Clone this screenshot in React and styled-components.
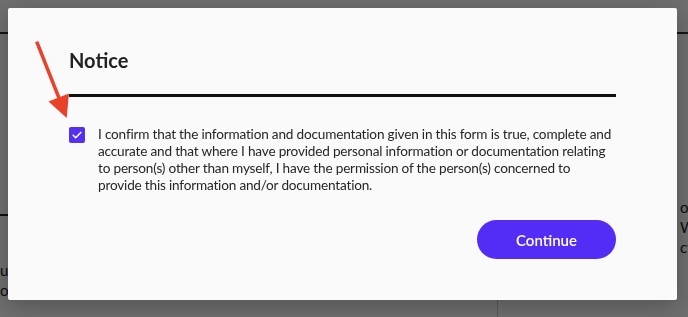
import React from 'react';
import styled, { createGlobalStyle } from 'styled-components';

const GlobalStyle = createGlobalStyle`
  html, body {
    margin: 0;
    padding: 0;
    background: #ffffff;
    font-family: Lato, "Liberation Sans", sans-serif;
    overflow: hidden;
  }
`

const Page = styled.div`
  width: 688px;
  height: 317px;
  display: flex;
  flex-direction: column;
  color: #222;
`
const Header = styled.div`
  height: 32px;
  border-bottom: 2px solid #333;
`
const Main = styled.div`
  flex: 1;
  display: grid;
  grid-template-columns: 497px 1fr;
`
const LeftCol = styled.div`
  padding-top: 180px;
`
const Rule = styled.div`
  height: 2px;
  background: #222;
  width: 200px;
  margin-bottom: 44px;
`
const BgLine = styled.div`
  font-size: 15px;
  line-height: 20px;
  white-space: nowrap;
`
const RightCol = styled.div`
  border-left: 1px solid #ccc;
  padding: 163px 0 0 182px;
`

const Overlay = styled.div`
  position: fixed;
  inset: 0;
  background: rgba(0, 0, 0, 0.57);
  padding: 8px;
  box-sizing: border-box;
`
const Modal = styled.div`
  width: 669px;
  box-sizing: border-box;
  background: #fafafa;
  border-radius: 2px;
  box-shadow: 0 6px 24px rgba(0, 0, 0, 0.25);
  padding: 39px 61px 41px;
  display: flex;
  flex-direction: column;
`
const Title = styled.h2`
  margin: 0;
  font-size: 20px;
  line-height: 26px;
  font-weight: 700;
  color: #222;
`
const Divider = styled.div`
  height: 3px;
  background: #111;
  margin: 21px 0 29px;
`
const Consent = styled.label`
  display: flex;
  gap: 13px;
  align-items: flex-start;
`
const Box = styled.span`
  flex: none;
  width: 16px;
  height: 16px;
  margin-top: 1px;
  border-radius: 2px;
  background: #5530f3;
  display: flex;
  align-items: center;
  justify-content: center;
`
const ConsentText = styled.p`
  margin: 0;
  font-size: 13.6px;
  letter-spacing: -0.19px;
  line-height: 17px;
  color: #262626;
`
const Line = styled.span`
  display: block;
  white-space: nowrap;
`
const Actions = styled.div`
  display: flex;
  justify-content: flex-end;
  margin-top: 26px;
`
const Button = styled.button`
  width: 139px;
  height: 39px;
  border: none;
  border-radius: 20px;
  background: #532cf5;
  color: #fff;
  font-family: Lato, "Liberation Sans", sans-serif;
  font-size: 15px;
  font-weight: 600;
  cursor: pointer;
`
const Arrow = styled.svg`
  position: absolute;
  left: 30px;
  top: 38px;
`

const lines = [
  'I confirm that the information and documentation given in this form is true, complete and',
  'accurate and that where I have provided personal information or documentation relating',
  'to person(s) other than myself, I have the permission of the person(s) concerned to',
  'provide this information and/or documentation.',
]

export default function App() {
  return (
    <>
      <GlobalStyle />
      <Page>
        <Header />
        <Main>
          <LeftCol>
            <Rule />
            <BgLine>unless otherwise stated</BgLine>
            <BgLine>of the applicant</BgLine>
          </LeftCol>
          <RightCol>
            <BgLine>op</BgLine>
            <BgLine>Wh</BgLine>
            <BgLine>cy</BgLine>
          </RightCol>
        </Main>
      </Page>
      <Overlay>
        <Modal>
          <Title>Notice</Title>
          <Divider />
          <Consent>
            <Box>
              <svg width="12" height="12" viewBox="0 0 12 12">
                <path d="M2.2 6.3 L4.7 8.7 L9.8 3.4" fill="none" stroke="#fff" strokeWidth="1.5" strokeLinecap="round" strokeLinejoin="round" />
              </svg>
            </Box>
            <ConsentText>
              {lines.map((l) => <Line key={l}>{l}</Line>)}
            </ConsentText>
          </Consent>
          <Actions>
            <Button>Continue</Button>
          </Actions>
        </Modal>
        <Arrow width="45" height="84" viewBox="0 0 45 84">
          <line x1="6.7" y1="3.7" x2="29" y2="60" stroke="#e8422b" strokeWidth="3.5" />
          <polygon points="36.7,80 38.9,55.5 18.5,63.5" fill="#e8422b" />
        </Arrow>
      </Overlay>
    </>
  );
}
